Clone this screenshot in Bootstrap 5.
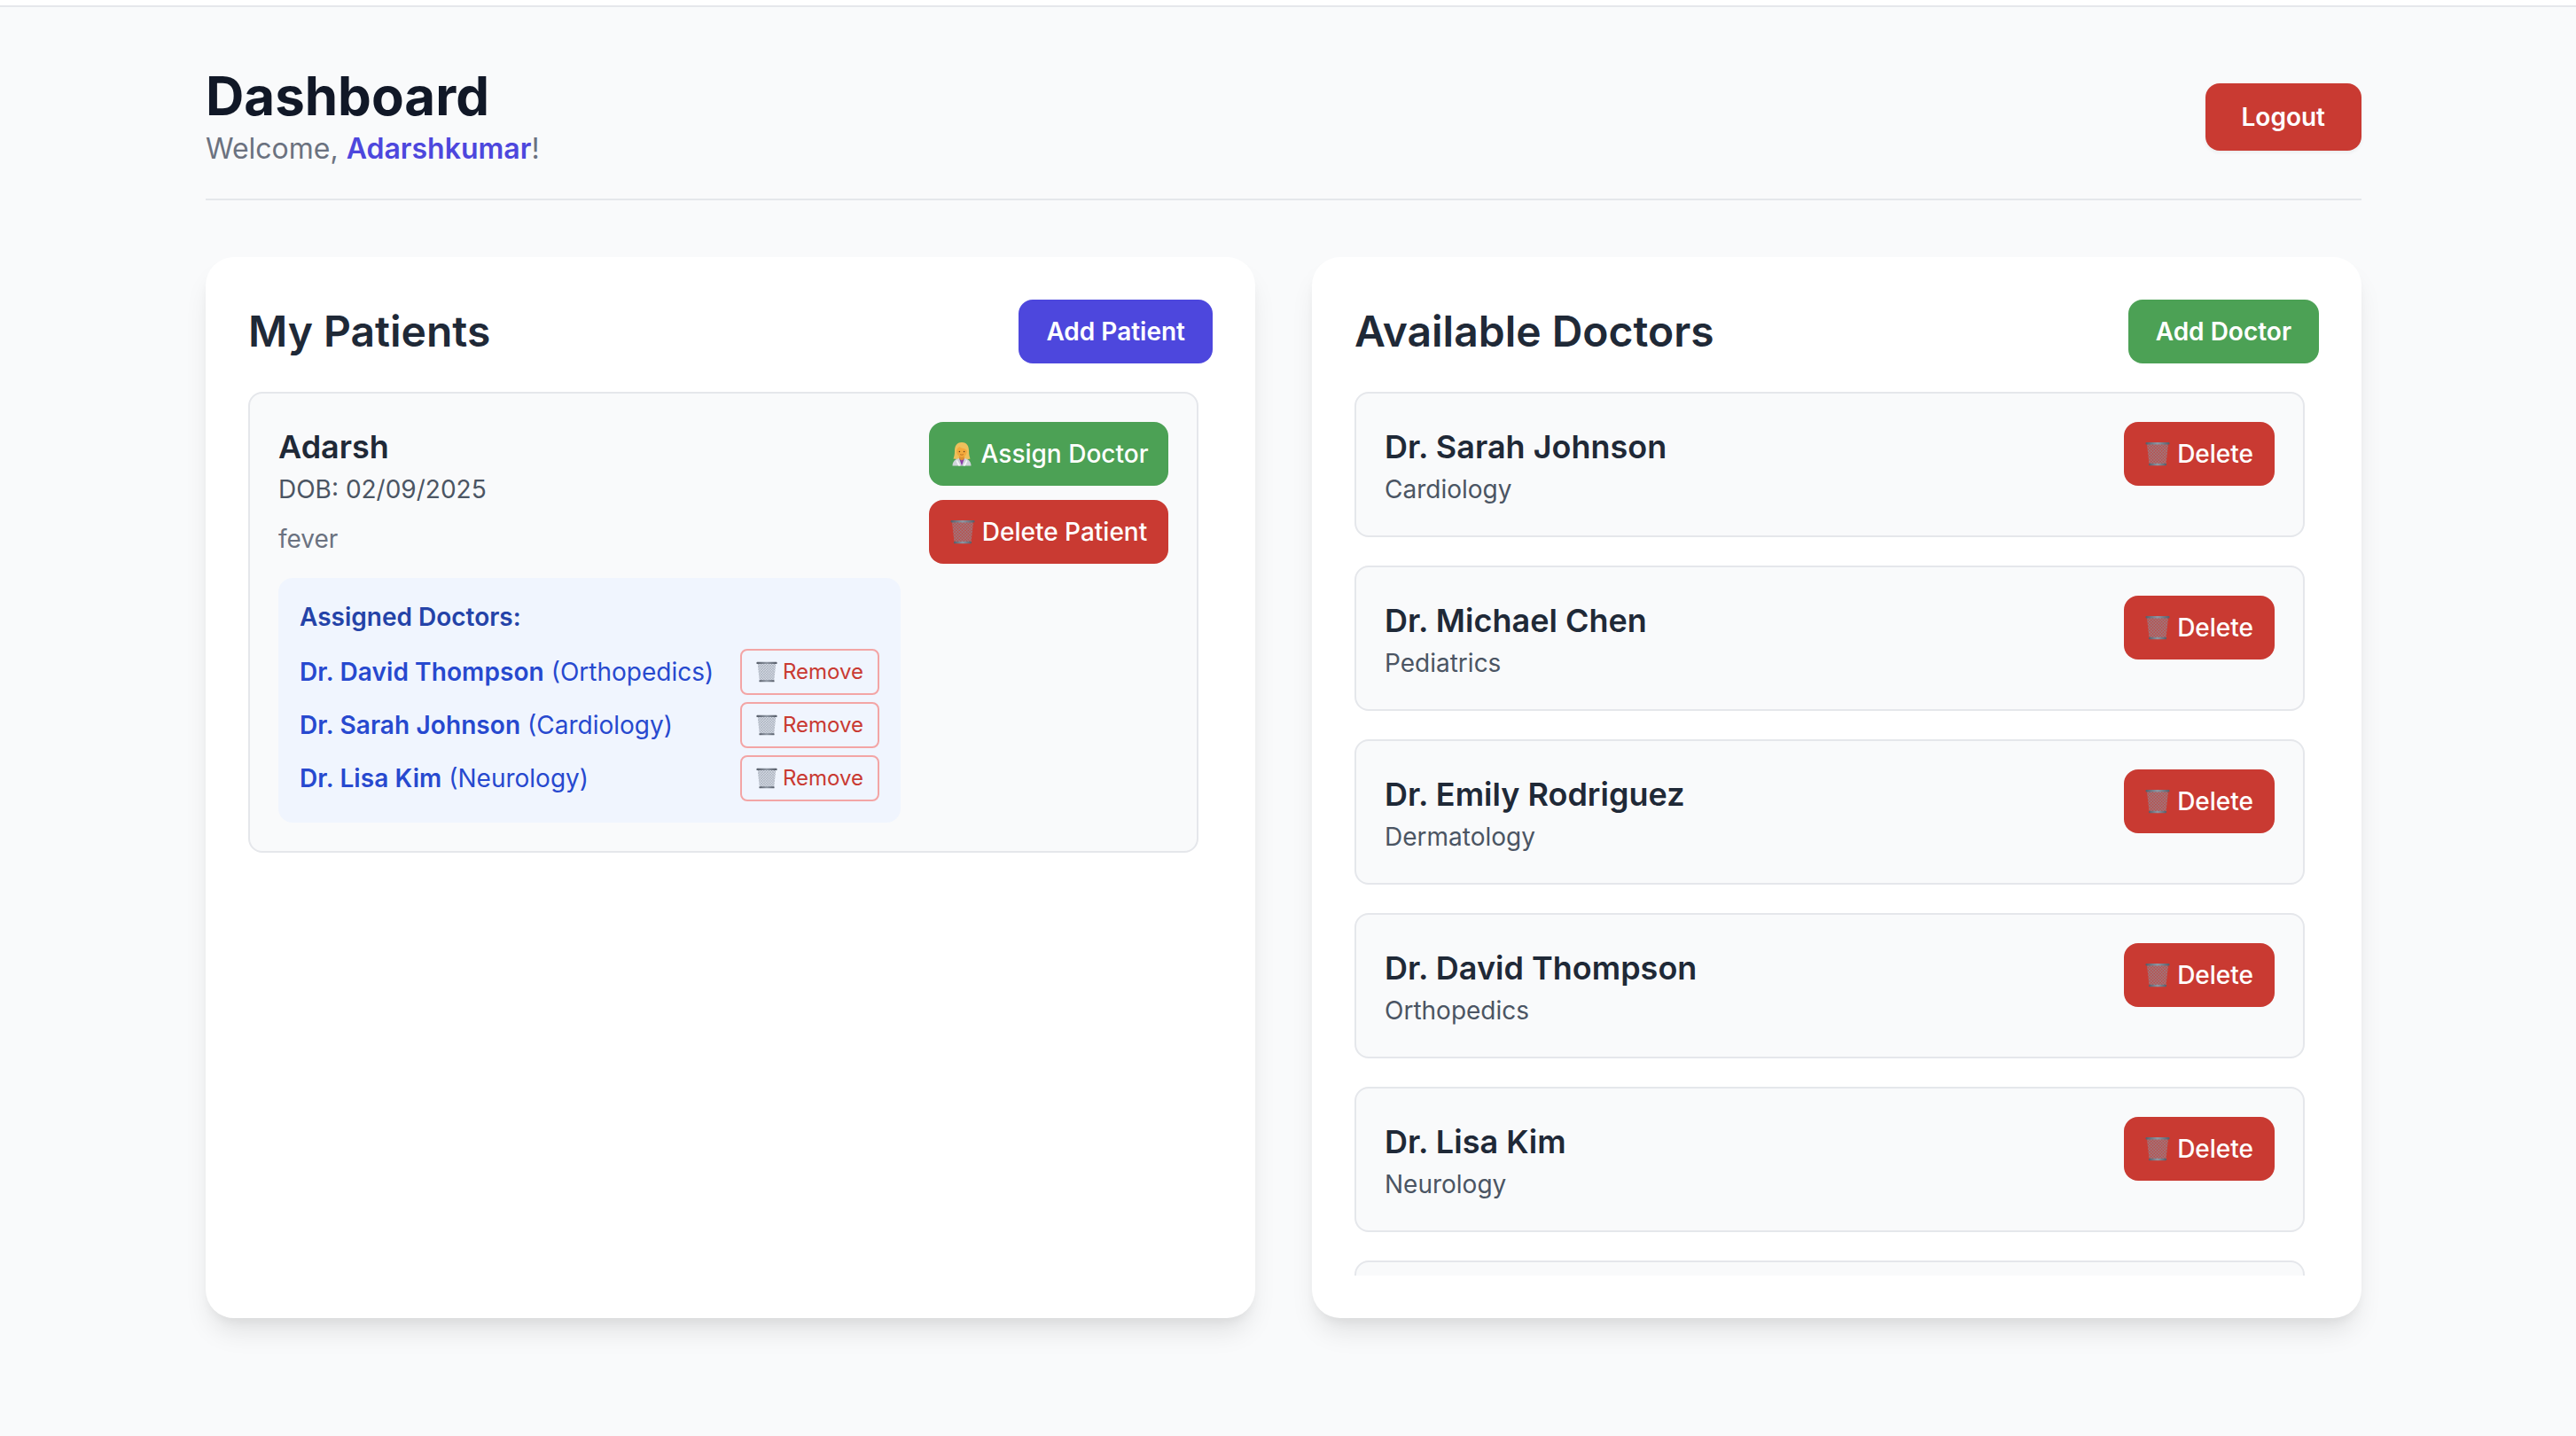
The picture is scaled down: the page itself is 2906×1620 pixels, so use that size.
<!DOCTYPE html>
<html lang="en">
<head>
  <meta charset="UTF-8">
  <title>Dashboard</title>
  <link href="https://cdn.jsdelivr.net/npm/bootstrap@5.3.0/dist/css/bootstrap.min.css" rel="stylesheet">
  <style>
    body { background: #f9fafb; font-family: "Inter", "Liberation Sans", sans-serif; color: #1f2937; }
    .top-strip { height: 8px; background: #fff; border-bottom: 2px solid #e5e7eb; }
    .shell { width: 2432px; margin-left: 232px; padding-top: 64px; min-height: 1612px; }
    .page-head { padding-bottom: 32px; border-bottom: 2px solid #e5e7eb; margin-bottom: 64px; }
    .page-title { font-size: 60px; line-height: 72px; font-weight: 700; color: #111827; margin: 0; }
    .welcome { font-size: 32px; line-height: 48px; color: #6b7280; margin: 0; }
    .welcome strong { color: #4d47dd; font-weight: 600; }
    .board { --bs-gutter-x: 64px; --bs-gutter-y: 0; }
    .panel-box { height: 1197px; padding: 48px; background: #fff; border: 0; border-radius: 32px;
      box-shadow: 0 20px 30px -6px rgba(0,0,0,.1), 0 8px 12px -4px rgba(0,0,0,.05); }
    .panel-title { font-size: 48px; line-height: 64px; font-weight: 600; color: #1f2937; margin: 0; }
    .panel-head { margin-bottom: 32px; }
    .scroll-list { height: 998px; overflow: hidden; padding-right: 16px; }
    .entry { background: #f9fafb; border: 2px solid #e5e7eb; border-radius: 16px; padding: 32px; margin-bottom: 32px; }
    .entry-name { font-size: 36px; line-height: 56px; font-weight: 600; color: #1f2937; margin: 0; }
    .entry-sub { font-size: 28px; line-height: 40px; color: #4b5563; margin: 0; }
    .entry-note { font-size: 28px; line-height: 40px; color: #6b7280; margin: 16px 0 0; }
    .ghost-entry { height: 164px; }
    .assigned { background: #f0f5fe; border-radius: 16px; padding: 24px; margin-top: 24px; }
    .assigned-title { font-size: 28px; line-height: 40px; font-weight: 600; color: #2443a8; margin: 0 0 16px; }
    .assigned-row { font-size: 28px; line-height: 52px; color: #2749cf; margin-bottom: 8px; }
    .assigned-row:last-child { margin-bottom: 0; }
    .assigned-row strong { font-weight: 600; letter-spacing: .1px; }
    .act-btn { height: 72px; padding: 0 24px; border: 0; border-radius: 16px; font-size: 28px; line-height: 72px;
      font-weight: 500; color: #fff; white-space: nowrap; display: flex; align-items: center; justify-content: center; gap: 8px; }
    .act-btn:hover { color: #fff; }
    .act-strong { padding: 0 31px; font-weight: 600; }
    .btn-red { background: #c93a32; }
    .btn-red:hover { background: #b5332c; }
    .btn-green { background: #4ca155; }
    .btn-green:hover { background: #43904b; }
    .btn-indigo { background: #4d47dd; }
    .btn-indigo:hover { background: #4338ca; }
    .logout-btn { height: 76px; padding: 0 41px; box-shadow: 0 2px 4px rgba(0,0,0,.06); }
    .side-actions { width: 270px; margin-left: 32px; flex: none; }
    .remove-btn { height: 52px; padding: 0 16px; background: transparent; border: 2px solid #f3a5a5; border-radius: 8px;
      color: #c93a32; font-size: 24px; line-height: 1; display: flex; align-items: center; gap: 6px; flex: none; }
    .remove-btn:hover { color: #c93a32; background: #fee2e2; border-color: #f3a5a5; }
    .ico { width: 28px; height: 28px; flex: none; }
    .ico-sm { width: 24px; height: 24px; flex: none; }
  </style>
</head>
<body>
<svg class="d-block" width="0" height="0">
  <defs>
    <pattern id="mesh" width="2.4" height="2.4" patternUnits="userSpaceOnUse" patternTransform="rotate(45)">
      <path d="M0 0H2.400M0 0V2.400" stroke="#8b93a1" stroke-width=".8" fill="none"/>
    </pattern>
    <linearGradient id="rim" x1="0" x2="1" y1="0" y2="0">
      <stop offset="0" stop-color="#555c68"/><stop offset=".5" stop-color="#8f97a3"/><stop offset="1" stop-color="#555c68"/>
    </linearGradient>
    <symbol id="trash" viewBox="0 0 28 28">
      <path d="M2 3H26L23.500 26H4.500Z" fill="url(#mesh)"/>
      <path d="M2 3H26L23.500 26H4.500Z" fill="#8b93a1" fill-opacity=".25"/>
      <rect x="0.500" y="1" width="27" height="2.600" rx="1" fill="url(#rim)"/>
      <rect x="4" y="24.800" width="20" height="2.400" rx="1" fill="url(#rim)"/>
    </symbol>
    <symbol id="doctor" viewBox="0 0 28 28">
      <path d="M14 1C8 1 6 5.500 6 10.500C6 14.500 5.500 17 4.500 19.500C6.500 20.500 21.500 20.500 23.500 19.500C22.500 17 22 14.500 22 10.500C22 5.500 20 1 14 1Z" fill="#edc05c"/>
      <path d="M3.500 27.500C3.500 22.500 6.500 20 11 19H17C21.500 20 24.500 22.500 24.500 27.500Z" fill="#cfd3da"/>
      <path d="M11 19L14 27.500L17 19Z" fill="#8a3fa8"/>
      <path d="M11 19L8.800 21L12.500 27.500H10.200L7.500 22ZM17 19L19.200 21L15.500 27.500H17.800L20.500 22Z" fill="#f4f5f7"/>
      <path d="M11.200 15.500H16.800V19.800L14 21.500L11.200 19.800Z" fill="#dd9030"/>
      <path d="M8.200 10.800C8.200 8.500 9.500 7.200 11.500 6C13.500 8 19.800 8 19.800 10.800C19.800 14.800 17.200 17.800 14 17.800C10.800 17.800 8.200 14.800 8.200 10.800Z" fill="#f3aa3c"/>
      <circle cx="11.400" cy="11.500" r=".8" fill="#5a3b1a"/><circle cx="16.600" cy="11.500" r=".8" fill="#5a3b1a"/>
      <path d="M12 14.600C13 15.300 15 15.300 16 14.600" stroke="#a5581a" stroke-width=".7" fill="none"/>
    </symbol>
  </defs>
</svg>

<div class="top-strip"></div>

<div class="shell">
  <header class="page-head d-flex justify-content-between align-items-center">
    <div>
      <h1 class="page-title">Dashboard</h1>
      <p class="welcome">Welcome, <strong>Adarshkumar</strong>!</p>
    </div>
    <button class="btn act-btn act-strong logout-btn btn-red">Logout</button>
  </header>

  <div class="row board">
    <div class="col-6">
      <section class="card panel-box">
        <div class="panel-head d-flex justify-content-between align-items-center">
          <h2 class="panel-title">My Patients</h2>
          <button class="btn act-btn act-strong btn-indigo">Add Patient</button>
        </div>
        <div class="scroll-list">
          <div class="entry d-flex">
            <div class="flex-grow-1">
              <h3 class="entry-name">Adarsh</h3>
              <p class="entry-sub">DOB: 02/09/2025</p>
              <p class="entry-note">fever</p>
              <div class="assigned">
                <h4 class="assigned-title">Assigned Doctors:</h4>
                <div class="assigned-row d-flex justify-content-between align-items-center">
                  <span><strong>Dr. David Thompson</strong> (Orthopedics)</span>
                  <button class="btn remove-btn"><svg class="ico-sm"><use href="#trash"/></svg>Remove</button>
                </div>
                <div class="assigned-row d-flex justify-content-between align-items-center">
                  <span><strong>Dr. Sarah Johnson</strong> (Cardiology)</span>
                  <button class="btn remove-btn"><svg class="ico-sm"><use href="#trash"/></svg>Remove</button>
                </div>
                <div class="assigned-row d-flex justify-content-between align-items-center">
                  <span><strong>Dr. Lisa Kim</strong> (Neurology)</span>
                  <button class="btn remove-btn"><svg class="ico-sm"><use href="#trash"/></svg>Remove</button>
                </div>
              </div>
            </div>
            <div class="side-actions d-flex flex-column gap-3">
              <button class="btn act-btn btn-green"><svg class="ico"><use href="#doctor"/></svg>Assign Doctor</button>
              <button class="btn act-btn btn-red"><svg class="ico"><use href="#trash"/></svg>Delete Patient</button>
            </div>
          </div>
        </div>
      </section>
    </div>

    <div class="col-6">
      <section class="card panel-box">
        <div class="panel-head d-flex justify-content-between align-items-center">
          <h2 class="panel-title">Available Doctors</h2>
          <button class="btn act-btn act-strong btn-green">Add Doctor</button>
        </div>
        <div class="scroll-list">
          <div class="entry d-flex justify-content-between align-items-start">
            <div><h3 class="entry-name">Dr. Sarah Johnson</h3><p class="entry-sub">Cardiology</p></div>
            <button class="btn act-btn btn-red"><svg class="ico"><use href="#trash"/></svg>Delete</button>
          </div>
          <div class="entry d-flex justify-content-between align-items-start">
            <div><h3 class="entry-name">Dr. Michael Chen</h3><p class="entry-sub">Pediatrics</p></div>
            <button class="btn act-btn btn-red"><svg class="ico"><use href="#trash"/></svg>Delete</button>
          </div>
          <div class="entry d-flex justify-content-between align-items-start">
            <div><h3 class="entry-name">Dr. Emily Rodriguez</h3><p class="entry-sub">Dermatology</p></div>
            <button class="btn act-btn btn-red"><svg class="ico"><use href="#trash"/></svg>Delete</button>
          </div>
          <div class="entry d-flex justify-content-between align-items-start">
            <div><h3 class="entry-name">Dr. David Thompson</h3><p class="entry-sub">Orthopedics</p></div>
            <button class="btn act-btn btn-red"><svg class="ico"><use href="#trash"/></svg>Delete</button>
          </div>
          <div class="entry d-flex justify-content-between align-items-start">
            <div><h3 class="entry-name">Dr. Lisa Kim</h3><p class="entry-sub">Neurology</p></div>
            <button class="btn act-btn btn-red"><svg class="ico"><use href="#trash"/></svg>Delete</button>
          </div>
          <div class="entry ghost-entry"></div>
        </div>
      </section>
    </div>
  </div>
</div>
</body>
</html>
